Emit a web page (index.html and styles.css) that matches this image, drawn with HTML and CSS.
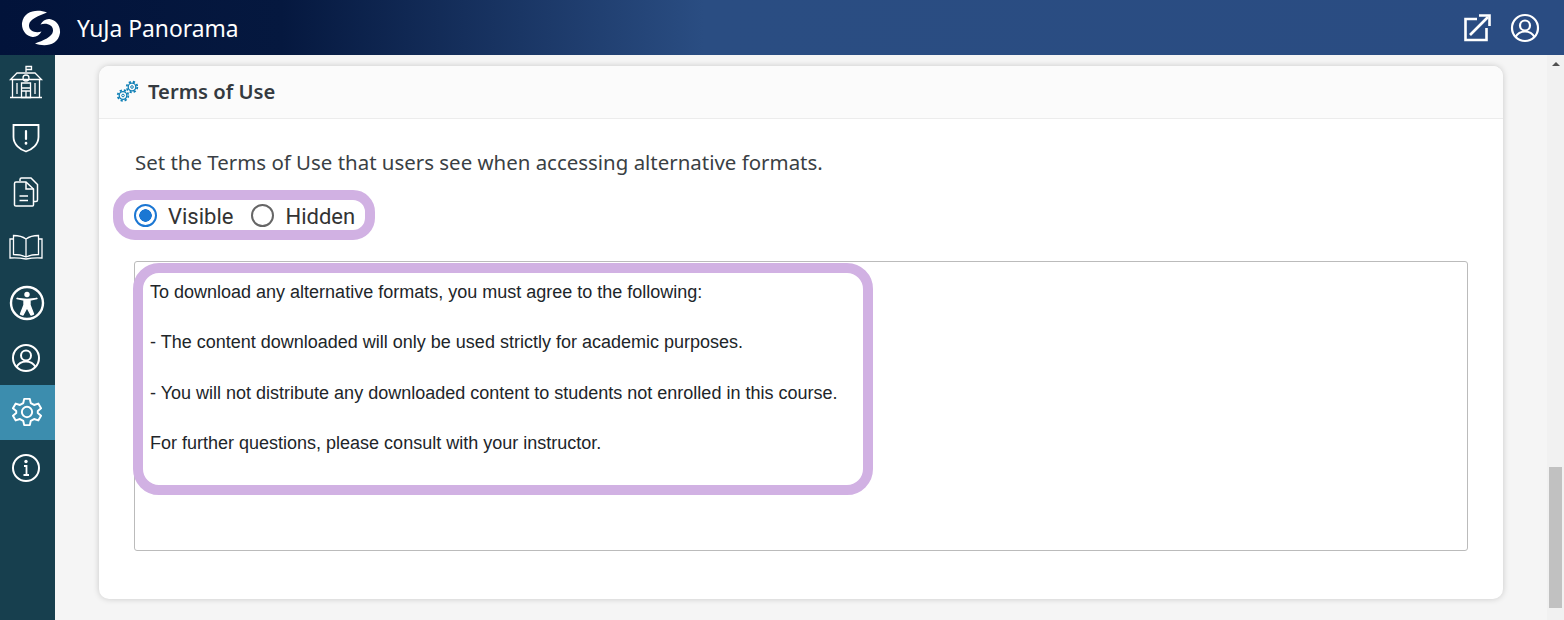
FILE: index.html
```html
<!DOCTYPE html>
<html lang="en">
<head>
<meta charset="utf-8">
<title>YuJa Panorama</title>
<link rel="stylesheet" href="styles.css">
</head>
<body>
<header class="topbar">
  <svg class="logo" viewBox="0 0 40 36" width="40" height="36" fill="#fff">
    <path d="M26 2.500C17 -1 3 0 1 13C0.300 21 6 26.500 11.500 27C15.500 27.300 18.500 25 20.500 21.500C15 23.500 7.500 21.500 8 15C8.500 9 18 5.500 26 2.500Z"/>
    <path d="M26 2.500C17 -1 3 0 1 13C0.300 21 6 26.500 11.500 27C15.500 27.300 18.500 25 20.500 21.500C15 23.500 7.500 21.500 8 15C8.500 9 18 5.500 26 2.500Z" transform="rotate(180 20 18)"/>
  </svg>
  <span class="brand">YuJa Panorama</span>
  <div class="top-actions">
    <svg viewBox="0 0 28 28" width="28" height="28" fill="none" stroke="#fff" stroke-width="2.600">
      <path d="M14 5H2.500V26H23.500V14"/>
      <path d="M7 21L25 3"/>
      <path d="M16 1.500H26.500V12"/>
    </svg>
    <svg viewBox="0 0 30 30" width="30" height="30" fill="none" stroke="#fff" stroke-width="2.200">
      <circle cx="15" cy="15" r="13"/>
      <circle cx="15" cy="12.500" r="5"/>
      <path d="M5.500 24C8 19.500 11 18.500 15 18.500S22 19.500 24.500 24"/>
    </svg>
  </div>
</header>
<div class="shell">
  <nav class="sidenav">
    <a class="nav-item">
      <svg class="nudge-up" viewBox="0 0 36 36" width="36" height="36" fill="none" stroke="#fff" stroke-width="1.300">
        <path d="M18 8V2.500H23.500V5.500H18"/>
        <path d="M9 9H27L33.500 15.500H2.500Z"/>
        <path d="M4.500 15.500V33.500M31.500 15.500V33.500M2 33.500H34"/>
        <path d="M9 19V30M27 19V30"/>
        <circle cx="18" cy="14" r="3"/>
        <path d="M13.500 19H22.500V33.500H13.500ZM13.500 24H22.500M18 27V33.500M13.500 27H22.500"/>
      </svg>
    </a>
    <a class="nav-item">
      <svg viewBox="0 0 30 32" width="30" height="32" fill="none" stroke="#fff" stroke-width="1.800" stroke-linecap="round">
        <path d="M2.500 3H27.500V15C27.500 22.500 21 27.500 15 29.500C9 27.500 2.500 22.500 2.500 15Z"/>
        <path d="M15 9V17" stroke-width="2.200"/>
        <path d="M15 21V21.500" stroke-width="2.600"/>
      </svg>
    </a>
    <a class="nav-item">
      <svg class="nudge-up" viewBox="0 0 28 32" width="28" height="32" fill="none" stroke="#fff" stroke-width="1.500">
        <path d="M8 5V3.500C8 2.500 8.500 2 9.500 2H19L25.500 8.500V24C25.500 25 25 25.500 24 25.500H21.500"/>
        <path d="M4 6H14L21.500 13V29C21.500 29.800 21 30 20.500 30H4C3 30 2.500 29.500 2.500 29V7.500C2.500 6.500 3 6 4 6Z"/>
        <path d="M14 6V13H21.500"/>
        <path d="M7.500 20H16M7.500 24.500H16"/>
      </svg>
    </a>
    <a class="nav-item">
      <svg class="nudge-up" viewBox="0 0 34 26" width="34" height="26" fill="none" stroke="#fff" stroke-width="1.300">
        <path d="M17 5C13 2 8 1.500 4.500 1.500V20.500C9 20.500 13 21 17 23C21 21 25 20.500 29.500 20.500V1.500C26 1.500 21 2 17 5ZM17 5V23"/>
        <path d="M4.500 5H1V24C7 23.500 12 24 17 25C22 24 27 23.500 33 24V5H29.500"/>
      </svg>
    </a>
    <a class="nav-item">
      <svg class="wide" viewBox="0 0 36 36" width="36" height="36" fill="none" stroke="#fff" stroke-width="2.400">
        <circle cx="18" cy="18" r="16"/>
        <circle cx="18" cy="9.500" r="2.700" fill="#fff" stroke="none"/>
        <path d="M8 13.500L15 15V20L11.500 29L14 30L18 22.500L22 30L24.500 29L21 20V15L28 13.500L18 14.500Z" fill="#fff" stroke-width="1.400" stroke-linejoin="round"/>
      </svg>
    </a>
    <a class="nav-item">
      <svg viewBox="0 0 30 30" width="30" height="30" fill="none" stroke="#fff" stroke-width="2">
        <circle cx="15" cy="15" r="13"/>
        <circle cx="15" cy="12.500" r="5"/>
        <path d="M5.500 24C8 19.500 11 18.500 15 18.500S22 19.500 24.500 24"/>
      </svg>
    </a>
    <a class="nav-item active">
      <svg class="gear" viewBox="0 0 32 32" width="30" height="30" fill="none" stroke="#fff" stroke-width="2.100" stroke-linejoin="round">
        <circle cx="16" cy="16" r="5.500"/>
        <path d="M13 2H19L20 6.500L23.500 8.500L28 7L31 12L27.500 15V17L31 20L28 25L23.500 23.500L20 25.500L19 30H13L12 25.500L8.500 23.500L4 25L1 20L4.500 17V15L1 12L4 7L8.500 8.500L12 6.500Z"/>
      </svg>
    </a>
    <a class="nav-item">
      <svg viewBox="0 0 30 30" width="30" height="30" fill="none" stroke="#fff" stroke-width="2">
        <circle cx="15" cy="15" r="13"/>
        <path d="M13 13H15.500V22M12.500 22H18" stroke-width="1.800"/>
        <circle cx="15" cy="8.500" r="1.700" fill="#fff" stroke="none"/>
      </svg>
    </a>
  </nav>
  <main class="content">
    <section class="card">
      <div class="card-head">
        <svg class="gears" viewBox="0 0 24 24" width="24" height="24" fill="none" stroke="#0f7fb5">
          <circle cx="16" cy="8" r="3.800" stroke-width="1.300"/>
          <circle cx="16" cy="8" r="5.300" stroke-width="1.800" stroke-dasharray="2.200 2"/>
          <circle cx="16" cy="8" r="1.300" stroke-width="1"/>
          <circle cx="7" cy="16.500" r="3.800" stroke-width="1.300"/>
          <circle cx="7" cy="16.500" r="5.300" stroke-width="1.800" stroke-dasharray="2.200 2"/>
          <circle cx="7" cy="16.500" r="1.300" stroke-width="1"/>
        </svg>
        <h2 class="card-title">Terms of Use</h2>
      </div>
      <div class="card-body">
        <p class="intro">Set the Terms of Use that users see when accessing alternative formats.</p>
        <div class="radio-group">
          <label class="radio"><span class="dot on"></span><span class="radio-text">Visible</span></label>
          <label class="radio"><span class="dot"></span><span class="radio-text">Hidden</span></label>
        </div>
        <div class="terms-box">
          <p class="terms-line">To download any alternative formats, you must agree to the following:</p>
          <p class="terms-line">- The content downloaded will only be used strictly for academic purposes.</p>
          <p class="terms-line">- You will not distribute any downloaded content to students not enrolled in this course.</p>
          <p class="terms-line">For further questions, please consult with your instructor.</p>
          <div class="terms-highlight"></div>
        </div>
      </div>
    </section>
  </main>
  <div class="scrollbar">
    <span class="arrow"></span>
    <span class="thumb"></span>
  </div>
</div>
</body>
</html>
```
FILE: styles.css
```css
* { box-sizing: border-box; }
html, body { margin: 0; height: 100%; overflow: hidden; }
body { display: flex; flex-direction: column; font-family: "Liberation Sans", Arial, sans-serif; color: #212529; background: #f5f5f5; }

.topbar { height: 55px; flex: none; display: flex; align-items: center; padding: 0 24px 0 21px; background: linear-gradient(90deg, #02133a 0%, #05183f 18%, #2a4d82 45%, #2a4c82 100%); color: #fff; }
.logo { flex: none; }
.brand { margin: 4px 0 0 16px; font: 400 22.800px/1 "Noto Sans", "Open Sans", sans-serif; }
.top-actions { margin-left: auto; display: flex; align-items: center; gap: 19px; }

.shell { flex: 1; display: flex; min-height: 0; }
.sidenav { width: 55px; flex: none; background: #173f4e; }
.nav-item { height: 55px; display: flex; align-items: center; justify-content: center; padding-right: 3px; }
.nav-item.active { background: #3c8dae; }
.nudge-up { margin-top: -2px; }
.wide { margin-right: -1px; }
.gear { margin: -2px -1px 0 0; }

.content { flex: 1; min-width: 0; padding: 11px 44px 0; background: #f5f5f5; }
.card { height: 533px; background: #fff; border-radius: 10px; box-shadow: 0 0 6px rgba(0,0,0,.18); overflow: hidden; }
.card-head { height: 53px; display: flex; align-items: center; padding-left: 17px; background: #fbfbfb; border-bottom: 1px solid #ececec; }
.gears { flex: none; margin-top: -2px; }
.card-title { margin: -2px 0 0 8px; font: 600 20.200px/1 "Noto Sans", "Open Sans", sans-serif; color: #343a40; }
.card-body { padding: 30px 35px 0 35px; }
.intro { margin: 0 0 0 1px; font: 400 20.450px/26px "Noto Sans", "Open Sans", sans-serif; color: #3a3f44; }

.radio-group { display: inline-flex; align-items: center; gap: 18px; height: 50px; margin: 15px 0 0 -21px; padding: 0 10px 0 11px; border: 10px solid #d1b1e3; border-radius: 22px; font: 400 22px/1 Roboto, sans-serif; color: #333; }
.radio { display: flex; align-items: center; gap: 11px; }
.radio-text { margin-top: 3px; }
.dot { width: 23px; height: 23px; border-radius: 50%; border: 2.500px solid #666; background: #fff; }
.dot.on { border-color: #1b77d3; background: radial-gradient(circle, #1b77d3 0 6px, #fff 6.500px); }

.terms-box { position: relative; height: 290px; margin-top: 21px; padding: 18px 15px 0; border: 1px solid #bbb; border-radius: 3px; font-size: 18px; line-height: 25.170px; color: #212529; }
.terms-line { margin: 0 0 25.170px; }
.terms-highlight { position: absolute; left: -2px; top: 1px; width: 740px; height: 232px; border: 10px solid #d1b1e3; border-radius: 26px; }

.scrollbar { width: 17px; flex: none; display: flex; flex-direction: column; align-items: center; background: #f1f1f1; padding-top: 7px; }
.arrow { width: 0; height: 0; border-left: 4px solid transparent; border-right: 4px solid transparent; border-bottom: 4px solid #505050; }
.thumb { width: 13px; height: 141px; margin-top: 401px; background: #c1c1c1; }
```
